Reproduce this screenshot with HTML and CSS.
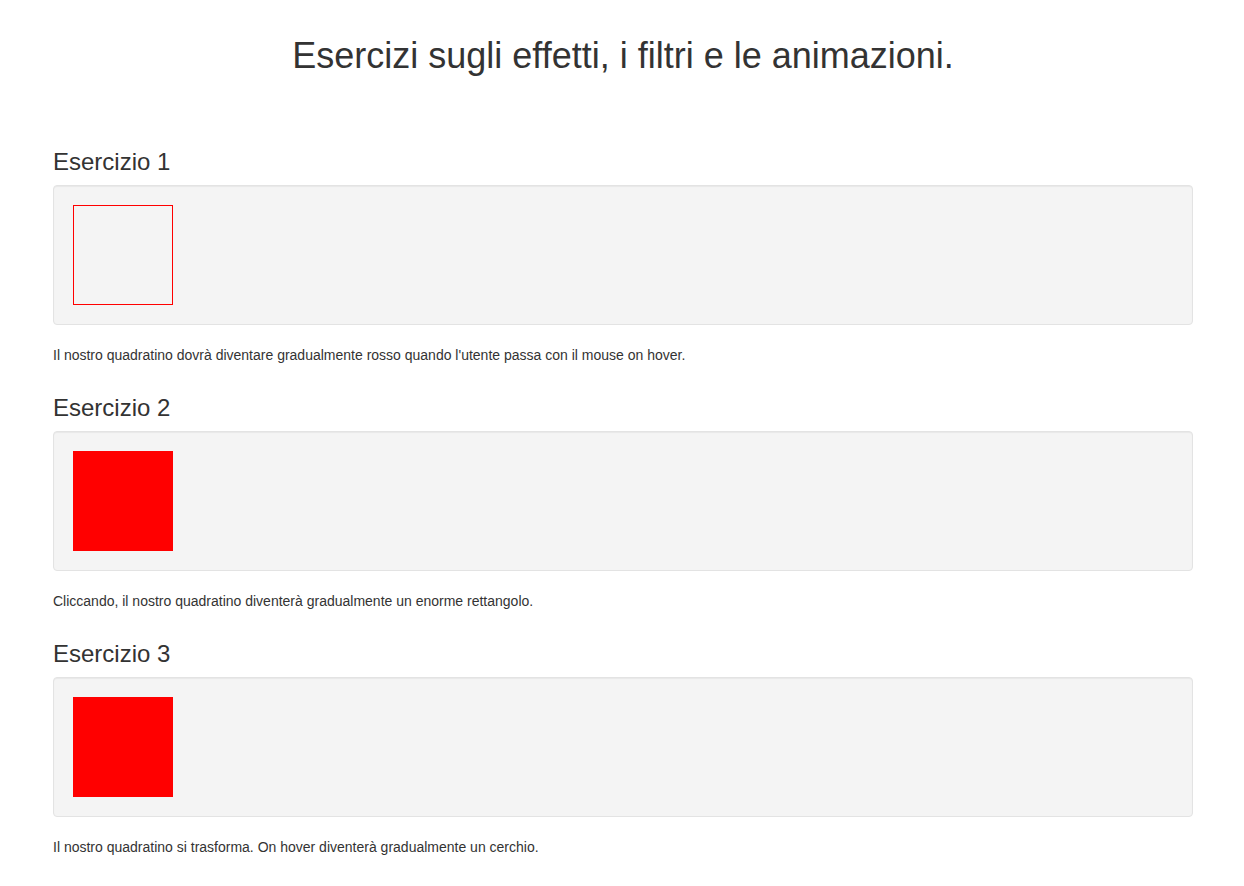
FILE: index.html
```html
<!DOCTYPE html>
<html lang="it">
<head>
<meta charset="utf-8">
<title>Esercizi</title>
<link rel="stylesheet" href="styles.css">
</head>
<body>
<div class="container">
  <header class="page-header">
    <h1>Esercizi sugli effetti, i filtri e le animazioni.</h1>
  </header>
  <section class="exercise">
    <h3>Esercizio 1</h3>
    <div class="well"><div class="box box-outline"></div></div>
    <p>Il nostro quadratino dovrà diventare gradualmente rosso quando l'utente passa con il mouse on hover.</p>
  </section>
  <section class="exercise">
    <h3>Esercizio 2</h3>
    <div class="well"><div class="box box-red"></div></div>
    <p>Cliccando, il nostro quadratino diventerà gradualmente un enorme rettangolo.</p>
  </section>
  <section class="exercise">
    <h3>Esercizio 3</h3>
    <div class="well"><div class="box box-red"></div></div>
    <p>Il nostro quadratino si trasforma. On hover diventerà gradualmente un cerchio.</p>
  </section>
</div>
</body>
</html>
```
FILE: styles.css
```css
* { box-sizing: border-box; }
html, body { margin: 0; padding: 0; }
body {
  font-family: "Liberation Sans", Arial, Helvetica, sans-serif;
  font-size: 14px;
  line-height: 1.42857;
  color: #333;
  background: #fff;
}
.container {
  width: 1170px;
  margin: 0 auto;
  padding: 0 14px 0 16px;
}
.page-header {
  padding-top: 36px;
  padding-bottom: 43px;
}
.page-header h1 {
  margin: 0;
  font-size: 36px;
  font-weight: 500;
  line-height: 1.1;
  text-align: center;
  padding-bottom: 10px;
}
.exercise {
  display: flow-root;
}
.exercise h3 {
  margin: 20px 0 10px;
  font-size: 24px;
  font-weight: 500;
  line-height: 26px;
}
.well {
  min-height: 20px;
  padding: 19px;
  margin-bottom: 20px;
  background: #f4f4f4;
  border: 1px solid #e3e3e3;
  border-radius: 4px;
  box-shadow: inset 0 1px 1px rgba(0,0,0,.05);
}
.box {
  width: 100px;
  height: 100px;
}
.box-outline { border: 1px solid red; }
.box-red { background: red; }
.exercise p {
  margin: 0 0 10px;
  font-size: 14px;
  line-height: 20px;
}
```
